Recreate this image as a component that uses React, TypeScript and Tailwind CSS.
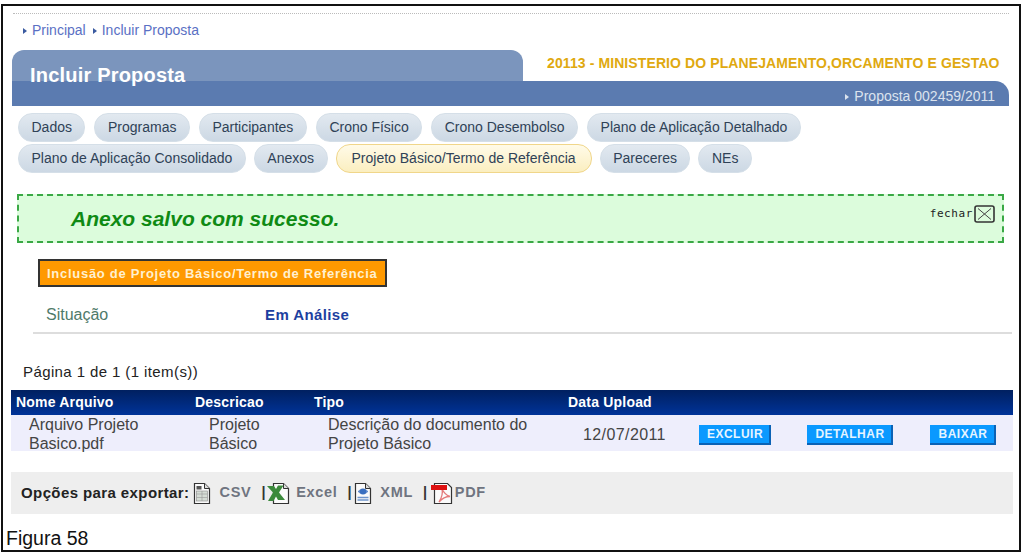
const TABS_ROW_1 = ['Dados', 'Programas', 'Participantes', 'Crono Físico', 'Crono Desembolso', 'Plano de Aplicação Detalhado'];
const TABS_ROW_2 = ['Plano de Aplicação Consolidado', 'Anexos', 'Projeto Básico/Termo de Referência', 'Pareceres', 'NEs'];

function Tab({ label }: { label: string }) {
  const active = label.startsWith('Projeto');
  return (
    <div
      className={
        'h-[29px] flex items-center rounded-[14px] border text-[14px] text-[#2f4257] ' +
        (active
          ? 'px-[15px] border-[#f0d68a] bg-gradient-to-b from-[#fffbe8] to-[#fbeec0]'
          : 'px-[12.5px] border-[#d5dfe8] bg-gradient-to-b from-[#e2e9f0] to-[#ccd8e4]')
      }
    >
      {label}
    </div>
  );
}

function Triangle({ className }: { className: string }) {
  return <span className={'inline-block w-0 h-0 border-y-[3px] border-y-transparent border-l-[4px] mr-[5px] align-[1px] ' + className} />;
}

function FileIcon({ children }: { children: React.ReactNode }) {
  return (
    <svg width="20" height="24" viewBox="0 0 20 24" className="shrink-0">
      <path d="M2.5 2.500h10l5 5v15h-15z" fill="#fbfbfb" stroke="#333" strokeWidth="1.2" />
      <path d="M12.5 2.500v5h5" fill="#ddd" stroke="#333" strokeWidth="1" />
      {children}
    </svg>
  );
}

function ActionButton({ label, className }: { label: string; className: string }) {
  return (
    <div className={'mt-[2px] h-[20px] flex items-center justify-center pl-[2px] bg-[#0a99ff] border-r-2 border-b-2 border-[#0b62b5] text-[#e6f4ff] text-[12px] font-bold tracking-[0.5px] ' + className}>
      {label}
    </div>
  );
}

export default function App() {
  return (
    <div className="w-[1024px] h-[554px] bg-white overflow-hidden font-['Liberation_Sans',Arial,sans-serif]">
      <div className="ml-[1px] mt-[4px] w-[1020px] h-[548px] border-2 border-[#111] flex flex-col text-[#333]">
        <div className="ml-[10px] mr-[10px] mt-[7px] border-t border-dotted border-[#bbb]" />

        <div className="ml-[20px] mt-[8px] h-[16px] flex items-center gap-[7px] text-[14px] text-[#5a70c4]">
          <span><Triangle className="border-l-[#3a5aa0]" />Principal</span>
          <span><Triangle className="border-l-[#3a5aa0]" />Incluir Proposta</span>
        </div>

        {/* header */}
        <div className="ml-[9px] w-[997px] mt-[12px]">
          <div className="flex h-[31px]">
            <div className="w-[511px] rounded-t-[12px] bg-[#7b95bd] pl-[18px] pt-[14px] text-white text-[20px] leading-[22px] font-bold tracking-[0.2px] whitespace-nowrap">
              Incluir Proposta
            </div>
            <div className="flex-1 pl-[24px] pt-[5px] text-[14px] leading-[16px] font-bold tracking-[0.1px] text-[#e0a910] whitespace-nowrap">
              20113 - MINISTERIO DO PLANEJAMENTO,ORCAMENTO E GESTAO
            </div>
          </div>
          <div className="h-[25px] bg-[#5b7bb0] rounded-tr-[14px] flex items-end justify-end pr-[14px] pb-[2px] text-[14px] leading-[16px] text-[#dbe3ee]">
            <span><Triangle className="border-l-[#dbe3ee]" />Proposta 002459/2011</span>
          </div>
        </div>

        {/* tabs */}
        <div className="ml-[15px] mt-[7px] flex flex-col gap-[2px]">
          <div className="flex gap-[9px]">{TABS_ROW_1.map((t) => <Tab key={t} label={t} />)}</div>
          <div className="flex gap-[8px]">{TABS_ROW_2.map((t) => <Tab key={t} label={t} />)}</div>
        </div>

        {/* success message */}
        <div className="ml-[14px] mt-[21px] w-[987px] h-[49px] border-2 border-dashed border-[#3aa845] bg-[#dcfcdc] flex justify-between pl-[52px] pr-[7px]">
          <div className="mt-[11px] text-[21px] leading-[24px] font-bold italic text-[#0f8a14]">Anexo salvo com sucesso.</div>
          <div className="mt-[9px] h-[18px] flex items-center gap-[1px] font-['DejaVu_Sans_Mono',monospace] text-[11px] tracking-[0.6px] text-[#222]">
            fechar
            <svg width="21" height="18" viewBox="0 0 21 18">
              <rect x="1" y="1" width="19" height="16" rx="2" fill="none" stroke="#333" strokeWidth="1.6" />
              <path d="M4 3.500l13 11M17 3.500l-13 11" stroke="#444" strokeWidth="1" />
            </svg>
          </div>
        </div>

        {/* form */}
        <div className="ml-[35px] mt-[16px] w-[349px] h-[28px] border-2 border-[#333] bg-[#ff9900] flex items-center pl-[7px] pt-[1px] text-[13px] font-bold tracking-[0.72px] text-[#fff0d0] whitespace-nowrap">
          Inclusão de Projeto Básico/Termo de Referência
        </div>
        <div className="ml-[30px] w-[979px] mt-[17px] h-[30px] pt-[1px] border-b-2 border-[#ddd] flex items-start leading-[20px]">
          <span className="ml-[13px] w-[219px] text-[16px] text-[#4f7a6a]">Situação</span>
          <span className="text-[15px] font-bold tracking-[0.4px] text-[#1d3fa0]">Em Análise</span>
        </div>

        <div className="ml-[20px] mt-[29px] text-[15px] leading-[18px] text-[#222] tracking-[0.4px]">Página 1 de 1 (1 item(s))</div>

        {/* grid */}
        <div className="ml-[8px] w-[1002px] mt-[9px]">
          <div className="h-[25px] grid grid-cols-[179px_119px_254px_1fr] items-center pl-[5px] bg-gradient-to-b from-[#002060] to-[#003399] text-white text-[14px] font-bold tracking-[0.2px]">
            <span>Nome Arquivo</span>
            <span>Descricao</span>
            <span>Tipo</span>
            <span>Data Upload</span>
          </div>
          <div className="h-[36px] grid grid-cols-[180px_119px_255px_116px_108px_123px_1fr] items-center pl-[18px] bg-[#eeeefc] text-[16px] leading-[19px] text-[#444] whitespace-nowrap">
            <span>Arquivo Projeto<br />Basico.pdf</span>
            <span>Projeto<br />Básico</span>
            <span>Descrição do documento do<br />Projeto Básico</span>
            <span className="text-[16px] tracking-[0.4px] mt-[1px]">12/07/2011</span>
            <ActionButton label="EXCLUIR" className="w-[72px]" />
            <ActionButton label="DETALHAR" className="w-[86px]" />
            <ActionButton label="BAIXAR" className="w-[66px]" />
          </div>
        </div>

        {/* export */}
        <div className="ml-[8px] w-[1002px] mt-[21px] h-[42px] bg-[#eeeeee] flex items-center pl-[10px] text-[14.5px] font-bold tracking-[0.7px] text-[#6f7480]">
          <span className="text-[#222] text-[15px] tracking-[0.4px] mr-[3px]">Opções para exportar:</span>
          <FileIcon>
            <rect x="4.500" y="10" width="11" height="10" fill="#d5dcd5" stroke="#888" strokeWidth="0.6" />
            <path d="M4.500 13h11M4.500 16.500h11M10 10v10" stroke="#999" strokeWidth="0.6" />
            <rect x="4.500" y="5" width="5" height="3.500" fill="#555" />
          </FileIcon>
          <span className="ml-[7px]">CSV</span>
          <span className="ml-[10px] text-[#333]">|</span>
          <svg width="24" height="24" viewBox="0 0 24 24" className="shrink-0 ml-[1px]">
            <path d="M6.500 2.500h10l5 5v15h-15z" fill="#fbfbfb" stroke="#333" strokeWidth="1.2" />
            <path d="M16.500 2.500v5h5" fill="#ddd" stroke="#333" strokeWidth="1" />
            <path d="M0 5h7l2 3 2-3.500h5.500L12 11.500l6 7.500h-7L9 15.500 6.500 20H1l5-8.500z" fill="#3c8a3c" />
          </svg>
          <span className="ml-[5px]">Excel</span>
          <span className="ml-[10px] text-[#333]">|</span>
          <span className="ml-[1px]" />
          <FileIcon>
            <ellipse cx="10" cy="10.500" rx="3.500" ry="3" fill="#3a6fc0" />
            <path d="M5 10.500l1.600-2v4zM15 10.500l-1.600-2v4z" fill="#3a6fc0" />
            <path d="M4.500 16.500h11M4.500 19h11" stroke="#6f95cc" strokeWidth="1.400" />
          </FileIcon>
          <span className="ml-[7px]">XML</span>
          <span className="ml-[10px] text-[#333]">|</span>
          <span className="ml-[3px]" />
          <svg width="22" height="24" viewBox="0 0 22 24" className="shrink-0">
            <path d="M3.500 2.500h13l4 4v16h-17z" fill="#fbfbfb" stroke="#333" strokeWidth="1.2" />
            <path d="M8 21c2.500-4 4-9 3-13 2 4 4.500 6.500 8 7.500-4.500 0-8 2-11 5.500z" fill="none" stroke="#e47a7a" strokeWidth="1.300" />
            <rect x="0" y="4" width="16" height="5" fill="#dd1111" />
          </svg>
          <span className="ml-[2px]">PDF</span>
        </div>

        <div className="ml-[3px] mt-[13px] text-[19.5px] leading-[22px] text-[#111]">Figura 58</div>
      </div>
    </div>
  );
}
